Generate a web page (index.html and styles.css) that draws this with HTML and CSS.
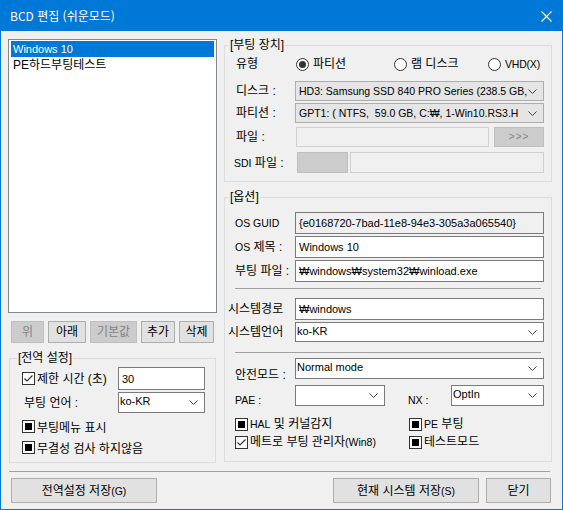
FILE: index.html
```html
<!DOCTYPE html>
<html lang="ko">
<head>
<meta charset="utf-8">
<title>BCD 편집</title>
<link rel="stylesheet" href="styles.css">
</head>
<body>
<div class="window">
  <div class="titlebar">
    <span class="title">BCD 편집 (쉬운모드)</span>
    <svg class="close" width="11" height="11" viewBox="0 0 11 11"><path d="M0.5 0.5L10.5 10.5M10.5 0.5L0.5 10.5" stroke="#fff" stroke-width="1.1" fill="none"/></svg>
  </div>
  <div class="body">
    <div class="main">
      <div class="leftcol">
        <div class="listbox">
          <div class="item sel">Windows 10</div>
          <div class="item">PE하드부팅테스트</div>
        </div>
        <div class="btnrow">
          <div class="btn dis b-up">위</div>
          <div class="btn b-down">아래</div>
          <div class="btn dis b-def">기본값</div>
          <div class="btn b-add">추가</div>
          <div class="btn b-del">삭제</div>
        </div>
        <div class="group g-global">
          <div class="legend lg-global">[전역 설정]</div>
          <div class="gbody gb-global">
            <div class="row h23">
              <div class="gl-label"><span class="cb"><svg width="11" height="11" viewBox="0 0 11 11"><polyline points="1.5,5.5 4,8 9.5,2.5" fill="none" stroke="#333" stroke-width="1.2"/></svg></span>제한 시간 (초)</div>
              <div class="edit w87">30</div>
            </div>
            <div class="row h21 mt2">
              <div class="gl-label ind2">부팅 언어 :</div>
              <div class="combo white w87"><span class="val">ko-KR</span><span class="arrow"><svg width="9" height="5" viewBox="0 0 9 5"><polyline points="0.5,0.5 4.5,4.5 8.5,0.5" fill="none" stroke="#444" stroke-width="1"/></svg></span></div>
            </div>
            <div class="row h16 mt5"><span class="cb ind"></span>부팅메뉴 표시</div>
            <div class="row h16 mt5"><span class="cb ind"></span>무결성 검사 하지않음</div>
          </div>
        </div>
      </div>
      <div class="rightcol">
        <div class="group g-boot">
          <div class="legend">[부팅 장치]</div>
          <div class="gbody gb-boot">
            <div class="row h14">
              <div class="lbl l59">유형</div>
              <div class="radios">
                <div class="radio r1"><span class="rb on"></span>파티션</div>
                <div class="radio r2"><span class="rb"></span>램 디스크</div>
                <div class="radio"><span class="rb"></span><span class="sm">VHD(X)</span></div>
              </div>
            </div>
            <div class="row h20 mt10">
              <div class="lbl l59">디스크 :</div>
              <div class="combo gray grow"><span class="val">HD3: Samsung SSD 840 PRO Series (238.5 GB,</span><span class="arrow"><svg width="9" height="5" viewBox="0 0 9 5"><polyline points="0.5,0.5 4.5,4.5 8.5,0.5" fill="none" stroke="#444" stroke-width="1"/></svg></span></div>
            </div>
            <div class="row h20 mt2">
              <div class="lbl l59">파티션 :</div>
              <div class="combo gray grow"><span class="val">GPT1: ( NTFS,&nbsp; 59.0 GB, C:₩, 1-Win10.RS3.H</span><span class="arrow"><svg width="9" height="5" viewBox="0 0 9 5"><polyline points="0.5,0.5 4.5,4.5 8.5,0.5" fill="none" stroke="#444" stroke-width="1"/></svg></span></div>
            </div>
            <div class="row h20 mt4">
              <div class="lbl l60">파일 :</div>
              <div class="edit dis w194"></div>
              <div class="btn dis b-browse">&gt;&gt;&gt;</div>
            </div>
            <div class="row h21 mt5">
              <div class="lbl l61 sdi"><span class="sm2">SDI</span> 파일 :</div>
              <div class="btn dis b-sdi"></div>
              <div class="edit dis grow ml2"></div>
            </div>
          </div>
        </div>
        <div class="group g-opt">
          <div class="legend">[옵션]</div>
          <div class="gbody gb-opt">
            <div class="row h22">
              <div class="lbl l60 sm2">OS GUID</div>
              <div class="edit ro grow">{e0168720-7bad-11e8-94e3-305a3a065540}</div>
            </div>
            <div class="row h22 mt2">
              <div class="lbl l60"><span class="sm2">OS</span> 제목 :</div>
              <div class="edit grow">Windows 10</div>
            </div>
            <div class="row h22 mt2">
              <div class="lbl l60">부팅 파일 :</div>
              <div class="edit grow">₩windows₩system32₩winload.exe</div>
            </div>
            <div class="hsep mt6"></div>
            <div class="row h22 mt9">
              <div class="lbl l67 out7">시스템경로</div>
              <div class="edit grow">₩windows</div>
            </div>
            <div class="row h20 mt2">
              <div class="lbl l67 out7">시스템언어</div>
              <div class="combo white grow"><span class="val">ko-KR</span><span class="arrow"><svg width="9" height="5" viewBox="0 0 9 5"><polyline points="0.5,0.5 4.5,4.5 8.5,0.5" fill="none" stroke="#444" stroke-width="1"/></svg></span></div>
            </div>
            <div class="hsep mt10"></div>
            <div class="row h21 mt5">
              <div class="lbl l60 low9">안전모드 :</div>
              <div class="combo white grow"><span class="val">Normal mode</span><span class="arrow"><svg width="9" height="5" viewBox="0 0 9 5"><polyline points="0.5,0.5 4.5,4.5 8.5,0.5" fill="none" stroke="#444" stroke-width="1"/></svg></span></div>
            </div>
            <div class="row h21 mt6">
              <div class="lbl l60 low7 sm2">PAE :</div>
              <div class="combo white w90"><span class="val"></span><span class="arrow"><svg width="9" height="5" viewBox="0 0 9 5"><polyline points="0.5,0.5 4.5,4.5 8.5,0.5" fill="none" stroke="#444" stroke-width="1"/></svg></span></div>
              <div class="lbl nx low7 sm2">NX :</div>
              <div class="combo white grow"><span class="val">OptIn</span><span class="arrow"><svg width="9" height="5" viewBox="0 0 9 5"><polyline points="0.5,0.5 4.5,4.5 8.5,0.5" fill="none" stroke="#444" stroke-width="1"/></svg></span></div>
            </div>
            <div class="row h16 mt10">
              <div class="cbitem w174"><span class="cb ind"></span><span class="sm2">HAL</span>&nbsp;및 커널감지</div>
              <div class="cbitem"><span class="cb ind"></span><span class="sm2">PE</span>&nbsp;부팅</div>
            </div>
            <div class="row h16 mt2">
              <div class="cbitem w174"><span class="cb"><svg width="11" height="11" viewBox="0 0 11 11"><polyline points="1.5,5.5 4,8 9.5,2.5" fill="none" stroke="#333" stroke-width="1.2"/></svg></span>메트로 부팅 관리자<span class="sm2">(Win8)</span></div>
              <div class="cbitem"><span class="cb ind"></span>테스트모드</div>
            </div>
          </div>
        </div>
      </div>
    </div>
    <div class="footsep"></div>
    <div class="footer">
      <div class="btn fbtn">전역설정 저장<span class="sm2">(G)</span></div>
      <div class="btn fbtn push">현재 시스템 저장<span class="sm2">(S)</span></div>
      <div class="btn fclose">닫기</div>
    </div>
  </div>
</div>
</body>
</html>
```

FILE: styles.css
```css
* { box-sizing: border-box; }
body {
  margin: 0;
  font-family: "Liberation Sans", "Noto Sans CJK KR", sans-serif;
  font-size: 12px;
  color: #000;
  background: #fff;
}
.window {
  width: 563px;
  height: 510px;
  border: 1px solid #0078d7;
  background: #f0f0f0;
  display: flex;
  flex-direction: column;
}
.titlebar {
  height: 30px;
  flex: none;
  background: #0078d7;
  color: #fff;
  display: flex;
  align-items: center;
  justify-content: space-between;
  padding: 0 10px 0 9px;
}
.title { font-family: "Noto Sans CJK KR", sans-serif; font-size: 12px; line-height: 16px; }
.close { display: block; }

.body { flex: 1; padding: 7px 10px 0 7px; }
.main { display: flex; gap: 7px; align-items: flex-start; }
.leftcol { width: 209px; flex: none; display: flex; flex-direction: column; }
.rightcol { width: 328px; flex: none; display: flex; flex-direction: column; }

.listbox {
  margin-top: 1px;
  height: 274px;
  border: 1px solid #828790;
  background: #fff;
  padding: 1px 2px;
}
.item { height: 16px; line-height: 16px; padding-left: 2px; white-space: nowrap; font-size: 11px; }
.item + .item { font-size: 12px; }
.item.sel { background: #0078d7; color: #fff; }

.btnrow { display: flex; gap: 4px; margin-top: 8px; padding-left: 3px; height: 22px; }
.btn {
  display: flex;
  align-items: center;
  justify-content: center;
  background: #e1e1e1;
  border: 1px solid #adadad;
  white-space: nowrap;
  line-height: 16px;
}
.btn.dis { background: #cccccc; border-color: #bfbfbf; color: #838383; }
.b-up { width: 33px; }
.b-down { width: 38px; }
.b-def { width: 47px; }
.b-add { width: 34px; }
.b-del { width: 35px; }
.b-browse { width: 50px; height: 20px; margin-left: 5px; font-size: 10px; letter-spacing: 1px; }
.b-sdi { width: 51px; height: 21px; margin-left: 2px; }

.group { border: 1px solid #dcdcdc; }
.legend {
  display: table;
  height: 14px;
  line-height: 14px;
  margin: -8px 0 0 4px;
  padding: 0 1px;
  background: #f0f0f0;
  white-space: nowrap;
}
.lg-global { margin-left: 7px; }
.g-global { margin: 15px 0 0 1px; width: 207px; }
.g-boot { margin-top: 7px; width: 328px; }
.g-opt { margin-top: 15px; width: 328px; }

.gb-global { padding: 2px 9px 7px 12px; }
.gb-boot { padding: 5px 7px 8px 11px; }
.gb-opt { padding: 8px 7px 11px 10px; }

.row { display: flex; align-items: center; white-space: nowrap; }
.h14 { height: 14px; }
.h16 { height: 16px; }
.h20 { height: 20px; }
.h21 { height: 21px; }
.h22 { height: 22px; }
.h23 { height: 23px; }
.mt2 { margin-top: 2px; }
.mt4 { margin-top: 4px; }
.mt5 { margin-top: 5px; }
.mt6 { margin-top: 6px; }
.mt9 { margin-top: 9px; }
.mt10 { margin-top: 10px; }
.ml2 { margin-left: 2px; }
.grow { flex: 1; min-width: 0; }
.w87 { width: 87px; }
.w90 { width: 90px; }
.w194 { width: 194px; }
.w174 { width: 174px; }

.lbl { flex: none; line-height: 16px; }
.l59 { width: 59px; }
.l60 { width: 60px; }
.l61 { width: 61px; }
.l67 { width: 67px; }
.out7 { margin-left: -7px; }
.sdi { margin-left: -2px; }
.low9 { align-self: flex-start; padding-top: 9px; }
.low7 { align-self: flex-start; padding-top: 7px; }
.nx { width: 43px; margin-left: 23px; }
.sm { font-size: 10.5px; letter-spacing: -0.2px; }
.sm2 { font-size: 10.5px; }

.gl-label { width: 96px; flex: none; display: flex; align-items: center; line-height: 16px; }
.ind2 { padding-left: 2px; }

.edit {
  height: 100%;
  border: 1px solid #7a7a7a;
  background: #fff;
  padding-left: 3px;
  display: flex;
  align-items: center;
  line-height: 16px;
  overflow: hidden;
  font-size: 11px;
  white-space: nowrap;
}
.edit.ro { background: #f0f0f0; }
.edit.dis { background: #f0f0f0; border-color: #d0d0d0; }

.combo {
  height: 100%;
  display: flex;
  overflow: hidden;
  font-size: 11px;
}
.combo .val { flex: 1; min-width: 0; overflow: hidden; white-space: nowrap; line-height: 16px; }
.combo .arrow { flex: none; width: 16px; align-self: center; display: flex; justify-content: flex-end; padding-right: 6px; }
.combo .arrow svg { display: block; }
.combo.gray { border: 1px solid #adadad; background: #e5e5e5; align-items: center; padding-left: 3px; font-size: 10.5px; }
.combo.white { border: 1px solid #7a7a7a; background: #fff; align-items: flex-start; padding-left: 1px; }

.radios { display: flex; align-items: center; }
.radio { display: flex; align-items: center; line-height: 14px; }
.r1 { width: 98px; margin-left: 1px; }
.r2 { width: 94px; }
.rb {
  width: 13px;
  height: 13px;
  border: 1px solid #333;
  border-radius: 50%;
  background: #fff;
  margin-right: 4px;
  display: flex;
  align-items: center;
  justify-content: center;
  flex: none;
}
.rb.on::after { content: ""; width: 7px; height: 7px; border-radius: 50%; background: #333; }

.cb {
  width: 13px;
  height: 13px;
  border: 1px solid #333;
  background: #fff;
  margin-right: 2px;
  display: flex;
  align-items: center;
  justify-content: center;
  flex: none;
}
.cb svg { display: block; }
.cb.ind::after { content: ""; width: 7px; height: 7px; background: #000; }
.cbitem { display: flex; align-items: center; line-height: 16px; }

.hsep { height: 1px; background: #a0a0a0; margin-right: 3px; }

.footsep { height: 1px; background: #a0a0a0; margin: 8px 2px 0 1px; }
.footer { display: flex; margin-top: 6px; padding-left: 3px; height: 25px; }
.fbtn { width: 146px; height: 25px; }
.push { margin-left: auto; }
.fclose { width: 65px; height: 25px; margin-left: 7px; margin-right: 1px; }
```
